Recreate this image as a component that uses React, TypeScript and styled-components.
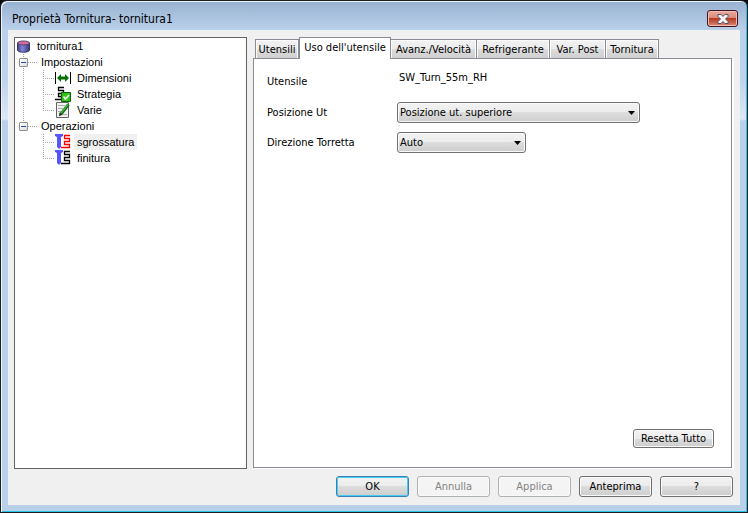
import React, { useState } from "react";
import styled, { createGlobalStyle, css } from "styled-components";

const GlobalStyle = createGlobalStyle`
  * { box-sizing: border-box; }
  body {
    margin: 0;
    background: #0b0b0d;
    color: #000;
    font-family: "DejaVu Sans Condensed", "DejaVu Sans", sans-serif;
    font-size: 11px;
    line-height: 14px;
  }
  button, select { font: inherit; color: inherit; }
  ul { list-style: none; margin: 0; padding: 0; }
`;

const Dialog = styled.main`
  display: flex;
  flex-direction: column;
  min-height: 100vh;
  padding: 0 6px 7px;
  border: 1px solid #1c1c22;
  border-radius: 7px 7px 0 0;
  background: linear-gradient(#98b2d0, #b9d0ea 29px, #bfd5ee 80px, #dce8f6 118px, #b9d0ea 120px);
  box-shadow: inset 1px 1px 0 #eef5fc, inset -1px -1px 0 #25c4e8;
`;

const TitleBar = styled.header`
  display: flex;
  align-items: center;
  justify-content: space-between;
  height: 29px;
  padding: 6px 3px 0 5px;
`;

const Title = styled.h1`
  margin: 0;
  font-size: 12px;
  font-weight: 400;
`;

const CloseButton = styled.button`
  display: grid;
  place-items: center;
  width: 31px;
  height: 17px;
  padding: 0;
  border: 1px solid #431420;
  border-radius: 3px;
  background: linear-gradient(#e9a99c, #d98b7c 45%, #b83a22 50%, #c5604a 75%, #d98a76);
  box-shadow: inset 0 0 0 1px #f0bdb2;
`;

const Client = styled.div`
  flex: 1;
  display: flex;
  flex-direction: column;
  margin: 0 1px;
  padding: 7px 7px 8px 6px;
  background: #f0f0f0;
`;

const Body = styled.div`
  flex: 1;
  display: flex;
  gap: 6px;
`;

const Tree = styled.nav`
  flex: 0 0 233px;
  border: 1px solid #646464;
  background: #fff;
  font-family: "Liberation Sans", Arial, sans-serif;
`;

const rowBase = css`
  display: flex;
  align-items: center;
  height: 16px;
  white-space: nowrap;
`;

const Root = styled.div`
  ${rowBase}
  gap: 7px;
  padding-left: 2px;
`;

const dotsDown = "repeating-linear-gradient(#a0a0a0 0 1px, transparent 1px 2px)";
const dotsAcross = "repeating-linear-gradient(90deg, #a0a0a0 0 1px, transparent 1px 2px)";

const Group = styled.li<{ $last: boolean }>`
  background: ${dotsDown} 8px 0 / 1px ${(p) => (p.$last ? "8px" : "100%")} no-repeat;
`;

const GroupRow = styled.div`
  ${rowBase}
  padding-left: 4px;
  background: ${dotsAcross} 13px 8px / 10px 1px no-repeat;
`;

const Toggle = styled.button`
  display: grid;
  place-items: center;
  width: 9px;
  height: 9px;
  margin-right: 13px;
  padding: 0;
  border: 1px solid #919191;
  border-radius: 1px;
  background: linear-gradient(135deg, #fff, #dcdcdc);
`;

const Leaf = styled.li<{ $last: boolean }>`
  ${rowBase}
  padding-left: 40px;
  background:
    ${dotsDown} 28px 0 / 1px ${(p) => (p.$last ? "8px" : "100%")} no-repeat,
    ${dotsAcross} 28px 8px / 12px 1px no-repeat;
`;

const LeafButton = styled.button<{ $selected: boolean }>`
  height: 16px;
  margin-left: 3px;
  padding: 0 3px;
  border: 0;
  line-height: 16px;
  background: ${(p) => (p.$selected ? "#f0f0f0" : "transparent")};
`;

const Tabbed = styled.section`
  flex: 1;
  display: flex;
  flex-direction: column;
  min-width: 0;
  padding: 0 1px 1px 0;
`;

const TabList = styled.div`
  display: flex;
  align-items: flex-end;
  height: 21px;
  padding-left: 2px;
`;

const Tab = styled.button<{ $width: number; $active: boolean }>`
  flex: 0 0 ${(p) => p.$width}px;
  height: 19px;
  padding: 2px 0 0;
  border: 1px solid #898c95;
  border-width: 1px 1px 0 0;
  white-space: nowrap;
  background: linear-gradient(#f2f2f2, #ebebeb 50%, #dddddd 50%, #cfcfcf);
  box-shadow: inset 1px 1px 0 #fcfcfc, inset -1px 0 0 #fcfcfc;
  &:first-child { border-left-width: 1px; }
  ${(p) =>
    p.$active &&
    css`
      z-index: 1;
      height: 22px;
      margin-bottom: -1px;
      padding: 0 0 1px;
      border-left-width: 1px;
      background: #fff;
      box-shadow: none;
    `}
`;

const Panel = styled.div`
  flex: 1;
  display: flex;
  flex-direction: column;
  justify-content: space-between;
  padding: 12px 17px 19px 13px;
  border: 1px solid #898c95;
  background: #fff;
  box-shadow: 2px 1px 0 #fff;
`;

const Form = styled.div`
  display: flex;
  flex-direction: column;
  gap: 9px;
`;

const Field = styled.div`
  display: grid;
  grid-template-columns: 130px 1fr;
  align-items: center;
  min-height: 21px;
`;

const Output = styled.output`
  padding: 0 0 8px 2px;
`;

const SelectWrap = styled.span<{ $width: number }>`
  position: relative;
  display: block;
  width: ${(p) => p.$width}px;
  max-width: 100%;
  height: 21px;
`;

const buttonFace = "linear-gradient(#f3f3f3, #ebebeb 50%, #dddddd 50%, #cdcdcd)";

const Select = styled.select`
  appearance: none;
  width: 100%;
  height: 21px;
  padding: 0 20px 0 2px;
  border: 1px solid #707070;
  border-radius: 3px;
  background: ${buttonFace};
  box-shadow: inset 0 0 0 1px #fafafa;
`;

const Arrow = styled.svg`
  position: absolute;
  top: 9px;
  right: 5px;
  pointer-events: none;
`;

const Button = styled.button<{ $primary?: boolean }>`
  width: 73px;
  height: 21px;
  padding: 0;
  border: 1px solid ${(p) => (p.$primary ? "#3c7fb1" : "#707070")};
  border-radius: 3px;
  background: ${buttonFace};
  box-shadow: inset 0 0 0 1px ${(p) => (p.$primary ? "#48cdf2" : "#fafafa")};
  &:disabled {
    border-color: #adb2b5;
    background: #f4f4f4;
    color: #838383;
  }
`;

const ResetButton = styled(Button)`
  align-self: flex-end;
  width: 81px;
  height: 19px;
`;

const Footer = styled.footer`
  display: flex;
  justify-content: flex-end;
  gap: 8px;
  padding-top: 7px;
`;

const CylinderIcon = () => (
  <svg width="13" height="13" viewBox="0 0 13 13" aria-hidden="true">
    <defs>
      <linearGradient id="cyl">
        <stop offset="0" stopColor="#444486" />
        <stop offset="0.4" stopColor="#8585d8" />
        <stop offset="1" stopColor="#37377c" />
      </linearGradient>
    </defs>
    <path d="M.5 3v7c0 3 12 3 12 0V3z" fill="url(#cyl)" stroke="#333568" />
    <ellipse cx="6.5" cy="3" rx="6" ry="2" fill="#d0709a" stroke="#55406f" />
  </svg>
);

const DimensionIcon = () => (
  <svg width="16" height="16" viewBox="0 0 16 16" aria-hidden="true">
    <path d="M0 2h1v12H0zM15 2h1v12h-1z" fill="#000" />
    <path d="M2 8l4-4v2.500h4V4l4 4-4 4V9.500H6V12z" fill="#087008" />
  </svg>
);

const StrategyIcon = () => (
  <svg width="16" height="16" viewBox="0 0 16 16" aria-hidden="true">
    <path
      d="M9 1.500H3.500v3h5v3h-5v3h3v3H0"
      fill="none"
      stroke="#000"
      strokeWidth="1.300"
    />
    <path d="M6.500 6.500h9v9h-9z" fill="#2fc611" stroke="#0b6208" />
    <path d="M8.500 10.500l2 2.500 3.500-4" fill="none" stroke="#fff" strokeWidth="1.600" />
  </svg>
);

const NotesIcon = () => (
  <svg width="16" height="16" viewBox="0 0 16 16" aria-hidden="true">
    <path d="M1.500 .5h12v15h-12z" fill="#f1f1f1" stroke="#626262" />
    <path d="M3 3.500h7M3 6.500h5M3 9.500h3M8 12.500h4" stroke="#aaa" />
    <path d="M13.500 2.500L6 12" stroke="#176a1b" strokeWidth="3" />
    <path d="M13 2.500L6 11" stroke="#43b33f" strokeWidth="1.400" />
    <path d="M4.500 10.500l3 2.200-3.500 1.600z" fill="#222" />
  </svg>
);

const OperationIcon = ({ color }: { color: string }) => (
  <svg width="16" height="16" viewBox="0 0 16 16" aria-hidden="true">
    <path d="M0 0h8v2L6 3v10l-1.500 1.500h-1L2 13V3L0 2z" fill="#5555fa" />
    <path
      d="M15 1.500H9.500v3h5v3h-5v3h5v3H6"
      fill="none"
      stroke={color}
      strokeWidth="1.300"
    />
  </svg>
);

const groups = [
  {
    label: "Impostazioni",
    items: [
      { label: "Dimensioni", icon: <DimensionIcon /> },
      { label: "Strategia", icon: <StrategyIcon /> },
      { label: "Varie", icon: <NotesIcon /> },
    ],
  },
  {
    label: "Operazioni",
    items: [
      { label: "sgrossatura", icon: <OperationIcon color="#f00" /> },
      { label: "finitura", icon: <OperationIcon color="#000" /> },
    ],
  },
];

const tabs = [
  { label: "Utensili", width: 44 },
  { label: "Uso dell'utensile", width: 92 },
  { label: "Avanz./Velocità", width: 86 },
  { label: "Refrigerante", width: 73 },
  { label: "Var. Post", width: 56 },
  { label: "Tornitura", width: 53 },
];

interface SelectFieldProps {
  id: string;
  label: string;
  width: number;
  options: string[];
}

const SelectField = ({ id, label, width, options }: SelectFieldProps) => (
  <Field>
    <label htmlFor={id}>{label}</label>
    <SelectWrap $width={width}>
      <Select id={id}>
        {options.map((o) => (
          <option key={o}>{o}</option>
        ))}
      </Select>
      <Arrow width="7" height="4" viewBox="0 0 7 4" aria-hidden="true">
        <path d="M0 0h7L3.500 4z" />
      </Arrow>
    </SelectWrap>
  </Field>
);

export default function App() {
  const [tab, setTab] = useState(1);
  const [selected, setSelected] = useState("sgrossatura");
  const [closed, setClosed] = useState<string[]>([]);

  const toggle = (label: string) =>
    setClosed((c) => (c.includes(label) ? c.filter((x) => x !== label) : [...c, label]));

  return (
    <>
      <GlobalStyle />
      <Dialog>
        <TitleBar>
          <Title>Proprietà Tornitura- tornitura1</Title>
          <CloseButton aria-label="Chiudi">
            <svg width="12" height="10" viewBox="0 0 12 10" aria-hidden="true">
              <path
                d="M1 .5h3l2 2 2-2h3v2L8.500 5 11 7.500v2H8l-2-2-2 2H1v-2L3.500 5 1 2.500z"
                fill="#f7f7f7"
                stroke="#525366"
              />
            </svg>
          </CloseButton>
        </TitleBar>
        <Client>
          <Body>
            <Tree aria-label="Operazioni di tornitura">
              <Root>
                <CylinderIcon />
                tornitura1
              </Root>
              <ul>
                {groups.map((g, gi) => (
                  <Group key={g.label} $last={gi === groups.length - 1}>
                    <GroupRow>
                      <Toggle aria-label={g.label} onClick={() => toggle(g.label)}>
                        <svg width="5" height="5" viewBox="0 0 5 5" aria-hidden="true">
                          <path d="M0 2h5v1H0z" fill="#2b4fa3" />
                          {closed.includes(g.label) && <path d="M2 0h1v5H2z" fill="#2b4fa3" />}
                        </svg>
                      </Toggle>
                      {g.label}
                    </GroupRow>
                    {!closed.includes(g.label) && (
                      <ul>
                        {g.items.map((item, i) => (
                          <Leaf key={item.label} $last={i === g.items.length - 1}>
                            {item.icon}
                            <LeafButton
                              $selected={selected === item.label}
                              onClick={() => setSelected(item.label)}
                            >
                              {item.label}
                            </LeafButton>
                          </Leaf>
                        ))}
                      </ul>
                    )}
                  </Group>
                ))}
              </ul>
            </Tree>
            <Tabbed>
              <TabList role="tablist">
                {tabs.map((t, i) => (
                  <Tab
                    key={t.label}
                    role="tab"
                    aria-selected={tab === i}
                    $active={tab === i}
                    $width={t.width}
                    onClick={() => setTab(i)}
                  >
                    {t.label}
                  </Tab>
                ))}
              </TabList>
              <Panel role="tabpanel">
                <Form>
                  <Field>
                    <label htmlFor="tool">Utensile</label>
                    <Output id="tool">SW_Turn_55m_RH</Output>
                  </Field>
                  <SelectField
                    id="position"
                    label="Posizione Ut"
                    width={243}
                    options={["Posizione ut. superiore", "Posizione ut. inferiore"]}
                  />
                  <SelectField id="direction" label="Direzione Torretta" width={129} options={["Auto"]} />
                </Form>
                <ResetButton>Resetta Tutto</ResetButton>
              </Panel>
            </Tabbed>
          </Body>
          <Footer>
            <Button $primary>OK</Button>
            <Button disabled>Annulla</Button>
            <Button disabled>Applica</Button>
            <Button>Anteprima</Button>
            <Button>?</Button>
          </Footer>
        </Client>
      </Dialog>
    </>
  );
}
